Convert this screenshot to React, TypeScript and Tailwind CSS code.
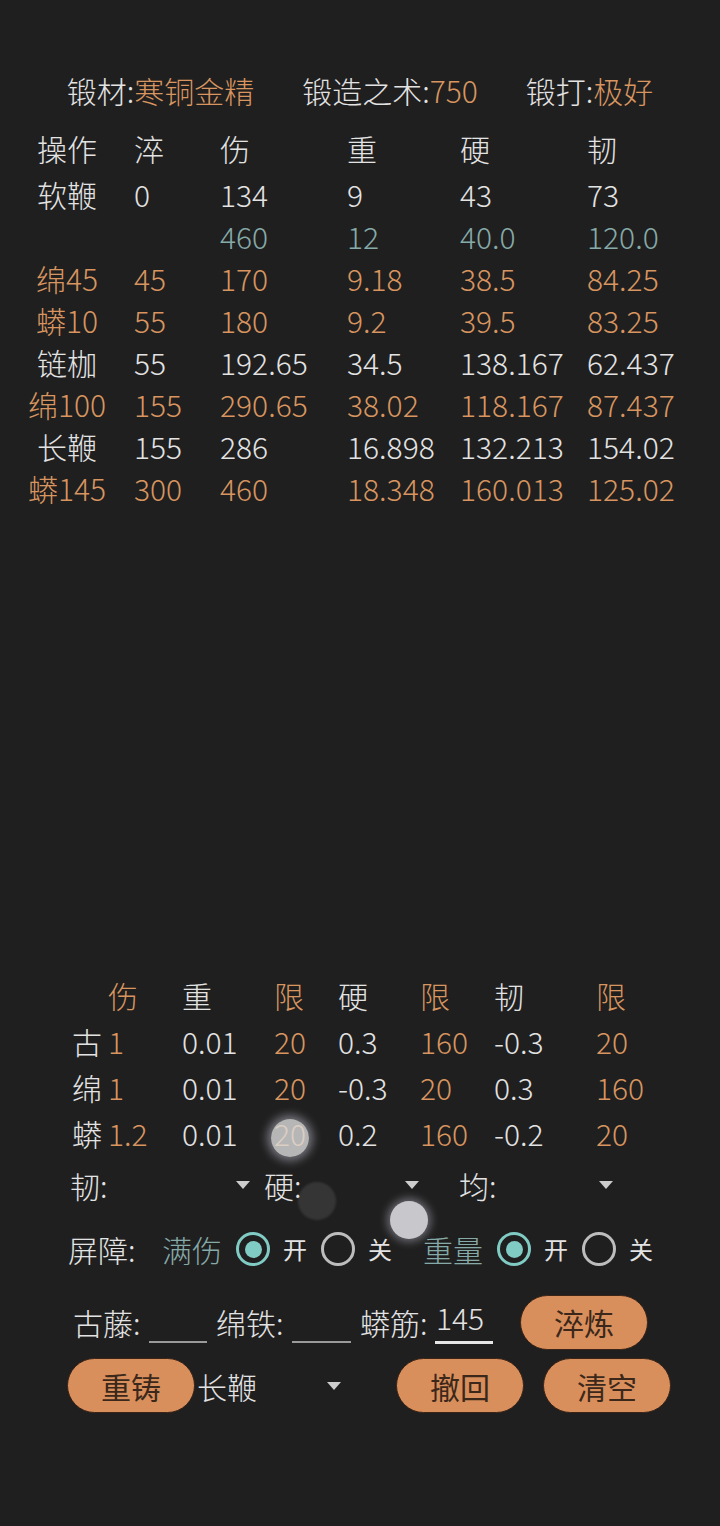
import React from "react";

const W = "text-[#e3e3e3]";
const O = "text-[#d8955f]";
const T = "text-[#86aaa8]";

type Row = { cells: string[]; color: string; mb?: boolean };

const mainRows: Row[] = [
  { cells: ["操作", "淬", "伤", "重", "硬", "韧"], color: W, mb: true },
  { cells: ["软鞭", "0", "134", "9", "43", "73"], color: W },
  { cells: ["", "", "460", "12", "40.0", "120.0"], color: T },
  { cells: ["绵45", "45", "170", "9.18", "38.5", "84.25"], color: O },
  { cells: ["蟒10", "55", "180", "9.2", "39.5", "83.25"], color: O },
  { cells: ["链枷", "55", "192.65", "34.5", "138.167", "62.437"], color: W },
  { cells: ["绵100", "155", "290.65", "38.02", "118.167", "87.437"], color: O },
  { cells: ["长鞭", "155", "286", "16.898", "132.213", "154.02"], color: W },
  { cells: ["蟒145", "300", "460", "18.348", "160.013", "125.02"], color: O },
];

const coefRows = [
  ["古", "1", "0.01", "20", "0.3", "160", "-0.3", "20"],
  ["绵", "1", "0.01", "20", "-0.3", "20", "0.3", "160"],
  ["蟒", "1.2", "0.01", "20", "0.2", "160", "-0.2", "20"],
];
// which columns are orange in the coefficient table
const coefOrange = [false, true, false, true, false, true, false, true];

const Caret = () => (
  <svg width="14" height="8" viewBox="0 0 14 8" className="shrink-0">
    <path d="M0 0 L14 0 L7 8 Z" fill="#cdcdcd" />
  </svg>
);

const Radio = ({ on }: { on: boolean }) =>
  on ? (
    <span className="w-[34px] h-[34px] rounded-full border-[3px] border-[#80cbc4] flex items-center justify-center shrink-0">
      <span className="w-[17px] h-[17px] rounded-full bg-[#80cbc4]" />
    </span>
  ) : (
    <span className="block w-[34px] h-[34px] rounded-full border-[3px] border-[#bdbdbd] shrink-0" />
  );

const Pill = ({ label, className = "" }: { label: string; className?: string }) => (
  <button
    className={`w-[128px] h-[55px] rounded-full bg-[#d98f5c] border border-[#3a2417] text-[#3b281b] text-[30px] font-normal flex items-center justify-center ${className}`}
  >
    {label}
  </button>
);

export default function App() {
  return (
    <div
      className="relative w-[720px] min-h-[1526px] bg-[#1f1f1f] overflow-hidden text-[30px] font-light leading-none"
      style={{ fontFamily: '"Noto Sans CJK SC", "Noto Sans", sans-serif' }}
    >
      {/* header */}
      <div className={`mt-[69px] h-[42px] flex items-center justify-center gap-[48px] ${W}`}>
        <span>
          锻材:<span className={O}>寒铜金精</span>
        </span>
        <span>
          锻造之术:<span className={O}>750</span>
        </span>
        <span>
          锻打:<span className={O}>极好</span>
        </span>
      </div>

      {/* stats table */}
      <div className="mt-[16px] pl-[20px]">
        {mainRows.map((r, i) => (
          <div
            key={i}
            className={`h-[42px] grid grid-cols-[114px_86px_127px_113px_127px_1fr] items-center ${r.color} ${r.mb ? "mb-[4px]" : ""}`}
          >
            {r.cells.map((c, j) => (
              <span key={j} className={j === 0 ? "text-center pr-[20px] whitespace-nowrap" : "whitespace-nowrap"}>
                {c}
              </span>
            ))}
          </div>
        ))}
      </div>

      {/* coefficient table */}
      <div className="mt-[463px] pl-[72px]">
        <div className="h-[46px] grid grid-cols-[36px_74px_92px_64px_82px_74px_102px_1fr] items-center">
          <span />
          <span className={O}>伤</span>
          <span className={W}>重</span>
          <span className={O}>限</span>
          <span className={W}>硬</span>
          <span className={O}>限</span>
          <span className={W}>韧</span>
          <span className={O}>限</span>
        </div>
        {coefRows.map((r, i) => (
          <div key={i} className="h-[46px] grid grid-cols-[36px_74px_92px_64px_82px_74px_102px_1fr] items-center">
            {r.map((c, j) => (
              <span key={j} className={coefOrange[j] ? O : W}>
                {c}
              </span>
            ))}
          </div>
        ))}
      </div>

      {/* spinners */}
      <div className={`h-[58px] pl-[70px] flex items-center ${W}`}>
        <div className="w-[194px] pr-[14px] flex items-center justify-between">
          <span>韧:</span>
          <Caret />
        </div>
        <div className="w-[195px] pr-[40px] flex items-center justify-between">
          <span>硬:</span>
          <Caret />
        </div>
        <div className="w-[161px] pr-[7px] flex items-center justify-between">
          <span>均:</span>
          <Caret />
        </div>
      </div>

      {/* barrier radios */}
      <div className={`h-[70px] pl-[68px] flex items-center ${W}`}>
        <span className="w-[94px] whitespace-nowrap">屏障:</span>
        <span className={`w-[68px] whitespace-nowrap ${T}`}>满伤</span>
        <span className="ml-[6px]">
          <Radio on />
        </span>
        <span className="ml-[13px] w-[25px] text-[24px] font-normal">开</span>
        <span className="ml-[13px]">
          <Radio on={false} />
        </span>
        <span className="ml-[13px] w-[25px] text-[24px] font-normal">关</span>
        <span className={`ml-[30px] w-[60px] whitespace-nowrap ${T}`}>重量</span>
        <span className="ml-[14px]">
          <Radio on />
        </span>
        <span className="ml-[13px] w-[25px] text-[24px] font-normal">开</span>
        <span className="ml-[13px]">
          <Radio on={false} />
        </span>
        <span className="ml-[13px] w-[25px] text-[24px] font-normal">关</span>
      </div>

      {/* materials input */}
      <div className={`mt-[11px] h-[54px] pl-[73px] flex items-center ${W}`}>
        <span className="w-[76px] whitespace-nowrap">古藤:</span>
        <span className="w-[58px] h-[30px] border-b-2 border-[#9a9a9a] self-center mt-[12px]" />
        <span className="ml-[9px] w-[76px] whitespace-nowrap">绵铁:</span>
        <span className="w-[59px] h-[30px] border-b-2 border-[#9a9a9a] self-center mt-[12px]" />
        <span className="ml-[9px] w-[75px] whitespace-nowrap">蟒筋:</span>
        <span className="w-[58px] h-[42px] border-b-[3px] border-[#e6e6e6] flex items-start pl-[1px] mt-[2px]">
          145
        </span>
        <Pill label="淬炼" className="ml-[27px]" />
      </div>

      {/* actions */}
      <div className={`mt-[9px] h-[55px] pl-[67px] flex items-center ${W}`}>
        <Pill label="重铸" />
        <span className="ml-[2px] w-[130px] whitespace-nowrap">长鞭</span>
        <Caret />
        <Pill label="撤回" className="ml-[55px]" />
        <Pill label="清空" className="ml-[19px]" />
      </div>

      {/* touch indicators */}
      <div className="absolute left-[271px] top-[1119px] w-[38px] h-[38px] rounded-full bg-[#dcdcdc]/80 shadow-[0_0_10px_4px_rgba(220,220,240,0.45)]" />
      <div className="absolute left-[298px] top-[1182px] w-[38px] h-[38px] rounded-full bg-white/10 blur-[1px]" />
      <div className="absolute left-[390px] top-[1201px] w-[38px] h-[38px] rounded-full bg-[#c8c8cc] shadow-[0_0_8px_3px_rgba(220,220,240,0.4)]" />
    </div>
  );
}
